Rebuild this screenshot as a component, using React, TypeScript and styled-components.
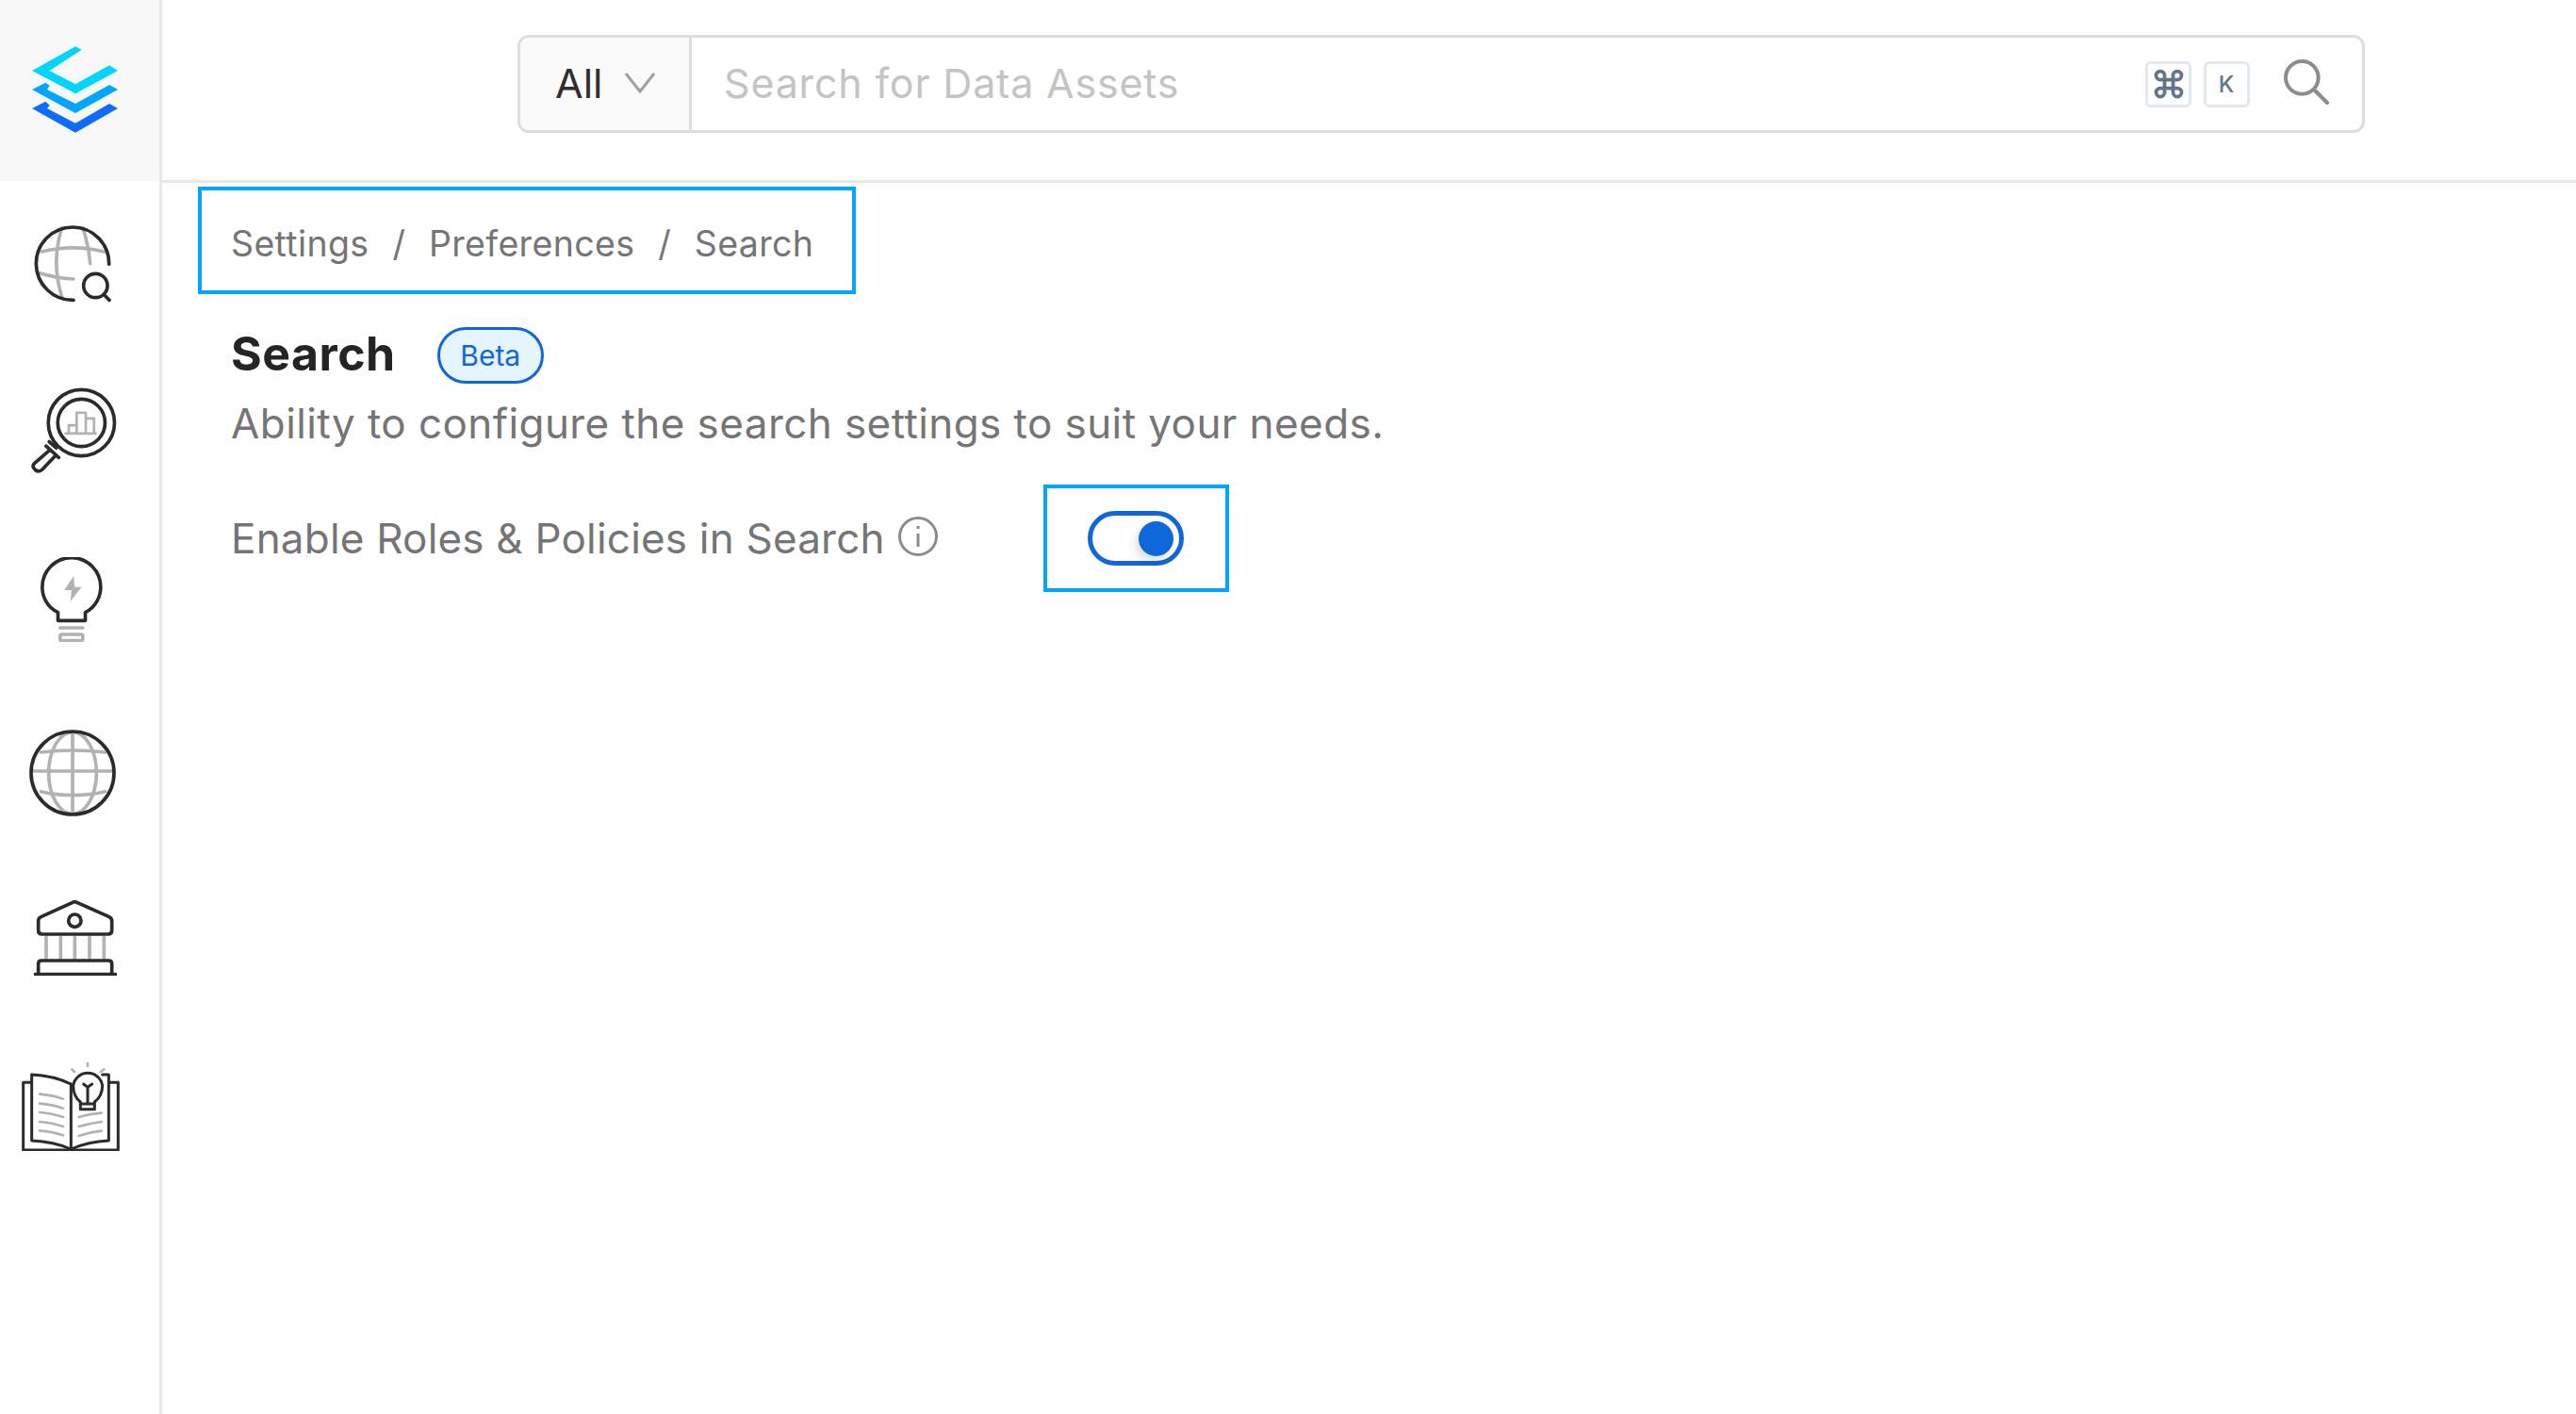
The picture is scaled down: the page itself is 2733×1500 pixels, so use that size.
import { Command } from "lucide-react";
import styled, { createGlobalStyle } from "styled-components";

const GlobalStyle = createGlobalStyle`
  html, body {
    margin: 0;
    height: 100%;
    background: #fff;
  }
  body {
    font-family: "Inter", "Open Sans", sans-serif;
  }
`;

const Page = styled.div`
  display: flex;
  width: 2733px;
  height: 1500px;
  overflow: hidden;
`;

const Sidebar = styled.aside`
  flex: 0 0 172px;
  box-sizing: border-box;
  border-right: 3px solid #e8e8e8;
`;

const LogoCell = styled.div`
  height: 192px;
  background: #f8f8f8;
  padding: 49px 0 0 34px;
  box-sizing: border-box;
`;

const Nav = styled.nav`
  display: flex;
  flex-direction: column;
  padding-top: 46px;
`;

const NavIcon = styled.svg<{ $left: number; $gap: number }>`
  display: block;
  margin-left: ${({ $left }) => $left}px;
  margin-top: ${({ $gap }) => $gap}px;
  fill: none;
  stroke-linecap: round;
  stroke-linejoin: round;
  .dark {
    stroke: #2b2b2b;
    stroke-width: 11;
  }
  .thin {
    stroke: #2b2b2b;
    stroke-width: 9;
  }
  .soft {
    stroke: #b2b2b2;
    stroke-width: 11;
  }
  .softthin {
    stroke: #b2b2b2;
    stroke-width: 8;
  }
`;

const Main = styled.main`
  flex: 1;
  min-width: 0;
`;

const Header = styled.header`
  height: 194px;
  box-sizing: border-box;
  border-bottom: 3px solid #e8e8e8;
  padding: 37px 0 0 377px;
`;

const SearchBar = styled.div`
  display: flex;
  width: 1960px;
  height: 104px;
  box-sizing: border-box;
  border: 3px solid #dedede;
  border-radius: 12px;
  overflow: hidden;
`;

const Scope = styled.div`
  flex: 0 0 182px;
  box-sizing: border-box;
  display: flex;
  align-items: center;
  padding: 0 0 2px 37px;
  background: #fafafa;
  border-right: 3px solid #dedede;
  color: #2f2f2f;
  font-size: 43px;
`;

const Chevron = styled.svg`
  margin-left: 23px;
  fill: none;
  stroke: #a0a0a0;
  stroke-width: 3;
`;

const Query = styled.div`
  flex: 1;
  display: flex;
  align-items: center;
  padding-left: 34px;
  color: #c4c4c4;
  font-size: 43px;
  letter-spacing: 0.8px;
`;

const Placeholder = styled.span`
  flex: 1;
  padding-bottom: 2px;
`;

const Shortcut = styled.kbd`
  flex: 0 0 49px;
  height: 49px;
  box-sizing: border-box;
  display: flex;
  align-items: center;
  justify-content: center;
  margin-left: 13px;
  border: 3px solid #e2e8f0;
  border-radius: 6px;
  color: #64748b;
  font-family: "Inter", sans-serif;
  font-size: 24px;
  font-weight: 500;
`;

const SearchIcon = styled.svg`
  margin: 0 35px 4px 36px;
  fill: none;
  stroke: #8c8c8c;
  stroke-width: 12;
  stroke-linecap: round;
`;

const Highlight = styled.div`
  box-sizing: border-box;
  border: 4px solid #00a6ff;
`;

const Crumbs = styled(Highlight)`
  display: flex;
  align-items: center;
  width: 698px;
  height: 114px;
  margin: 4px 0 0 38px;
  padding: 6px 0 0 31px;
  color: #757575;
  font-size: 37.5px;
`;

const Crumb = styled.span`
  letter-spacing: 0.35px;
`;

const Slash = styled.span`
  margin: 0 25px;
`;

const Content = styled.section`
  padding: 32px 0 0 73px;
`;

const TitleRow = styled.div`
  display: flex;
  align-items: center;
  height: 62px;
`;

const Title = styled.h1`
  margin: 0;
  color: #242424;
  font-size: 50px;
  font-weight: 700;
  letter-spacing: 0.5px;
`;

const Badge = styled.span`
  box-sizing: border-box;
  width: 113px;
  height: 60px;
  margin: 4px 0 0 44px;
  display: flex;
  align-items: center;
  justify-content: center;
  background: #e6f4ff;
  border: 3px solid #0f67d9;
  border-radius: 30px;
  color: #0f67d9;
  font-size: 30px;
`;

const Description = styled.p`
  margin: 10px 0 0;
  color: #757575;
  font-size: 44px;
  line-height: 66px;
  letter-spacing: 0.42px;
`;

const SettingRow = styled.div`
  display: flex;
  align-items: center;
  margin-top: 32px;
`;

const SettingLabel = styled.span`
  color: #757575;
  font-size: 44px;
  letter-spacing: 0.2px;
`;

const InfoIcon = styled.svg`
  margin: 0 0 4px 14px;
  fill: none;
  stroke: #8c8c8c;
`;

const ToggleBox = styled(Highlight)`
  display: flex;
  align-items: center;
  justify-content: center;
  width: 197px;
  height: 114px;
  margin-left: 112px;
`;

const Toggle = styled.div`
  box-sizing: border-box;
  width: 102px;
  height: 58px;
  display: flex;
  align-items: center;
  justify-content: flex-end;
  padding-right: 6px;
  border: 5px solid #0f67d9;
  border-radius: 29px;
  background: #fff;
`;

const Knob = styled.div`
  width: 37px;
  height: 37px;
  border-radius: 50%;
  background: #0f67d9;
  box-shadow: -3px 5px 10px rgba(0, 0, 0, 0.14);
`;

const Logo = () => (
  <svg width="91" height="92" viewBox="102 148 273 274">
    <polygon fill="#00d5ff" points="240,148 260,158 158,225 240,268 348,208 375,225 240,298 102,225" />
    <polygon fill="#00a6ff" points="102,285 145,263 158,272 150,285 240,330 348,270 375,285 240,360" />
    <polygon fill="#0f6bff" points="102,345 145,323 158,335 150,345 240,392 348,330 375,345 240,422" />
  </svg>
);

const GlobeSearch = () => (
  <NavIcon $left={36} $gap={0} width="82" height="83" viewBox="106 713 246 249">
    <path className="soft" d="M130 800 Q230 775 330 800" />
    <path className="soft" d="M125 868 Q180 885 232 887" />
    <path className="soft" d="M195 725 Q160 830 195 945" />
    <path className="soft" d="M262 725 Q280 780 285 838" />
    <path className="dark" d="M345 840 A116 116 0 1 0 232 954" />
    <circle className="dark" cx="302" cy="908" r="38" />
    <path className="dark" d="M330 938 L346 954" />
  </NavIcon>
);

const InsightSearch = () => (
  <NavIcon $left={33} $gap={90} width="92" height="91" viewBox="100 150 272 272">
    <path className="softthin" d="M208 296 H304 M218 296 V270 H243 V296 M243 270 V230 H272 V296 M272 248 H298 V296" />
    <circle className="dark" cx="258" cy="262" r="105" />
    <circle className="dark" cx="258" cy="262" r="75" />
    <path className="dark" d="M146 336 L186 372 M178 342 L156 322 M156 350 L108 392 Q100 402 112 412 Q124 420 134 410 L176 366" />
  </NavIcon>
);

const Bulb = () => (
  <NavIcon $left={43} $gap={89} width="67" height="90" viewBox="130 690 200 270">
    <path className="dark" d="M185 866 C150 850 135 815 135 785 A93 93 0 0 1 321 785 C321 815 305 850 272 866 V892 H185 Z" />
    <polygon fill="#b2b2b2" points="235,750 205,795 228,795 225,830 260,785 238,785" />
    <path className="soft" d="M192 915 H264" />
    <rect className="soft" x="192" y="936" width="72" height="20" rx="5" />
  </NavIcon>
);

const Globe = () => (
  <NavIcon $left={31} $gap={93} width="92" height="92" viewBox="93 338 276 276">
    <ellipse className="soft" cx="231" cy="476" rx="76" ry="130" />
    <path className="soft" d="M231 346 V606 M100 470 H362" />
    <path className="soft" d="M130 410 Q230 398 335 410 M130 535 Q230 558 335 535" />
    <circle className="dark" cx="231" cy="476" r="132" />
  </NavIcon>
);

const Bank = () => (
  <NavIcon $left={36} $gap={89} width="88" height="80" viewBox="108 -20 264 240">
    <path className="soft" d="M147 98 V164 M193 98 V164 M238 98 V164 M285 98 V164 M331 98 V164" />
    <path className="dark" d="M238 -16 L132 32 Q122 36 122 46 V76 Q122 88 134 88 H344 Q356 88 356 76 V46 Q356 36 346 32 Z" />
    <circle className="dark" cx="238" cy="45" r="20" />
    <path className="dark" d="M122 212 V182 Q122 172 132 172 H346 Q356 172 356 182 V212 M112 216 H368" />
  </NavIcon>
);

const Book = () => (
  <NavIcon $left={23} $gap={92} width="104" height="94" viewBox="68 496 312 282">
    <path className="softthin" d="M278 498 V508 M228 518 L236 526 M330 518 L320 526" />
    <path className="softthin" d="M125 597 Q165 600 200 612 M125 627 Q165 630 200 642 M125 655 Q165 658 200 670 M125 685 Q165 688 200 700 M125 713 Q165 716 200 728" />
    <path className="softthin" d="M250 670 Q285 660 322 657 M250 700 Q285 690 322 685 M250 730 Q285 718 322 714" />
    <path className="thin" d="M100 560 H73 V775 H375 V560 H348" />
    <path className="thin" d="M225 565 Q170 538 100 535 V745 Q170 748 225 772 Q280 748 345 745 V535 H325" />
    <path className="thin" d="M225 565 V772" />
    <path className="thin" fill="#fff" d="M255 622 C240 610 232 592 232 570 A47 47 0 0 1 325 570 C325 592 315 610 300 622 V645 H255 Z" />
    <path className="thin" d="M265 565 L278 575 L292 565 M278 575 V622 M258 628 H298" />
  </NavIcon>
);

export default function App() {
  return (
    <>
      <GlobalStyle />
      <Page>
        <Sidebar>
          <LogoCell>
            <Logo />
          </LogoCell>
          <Nav>
            <GlobeSearch />
            <InsightSearch />
            <Bulb />
            <Globe />
            <Bank />
            <Book />
          </Nav>
        </Sidebar>
        <Main>
          <Header>
            <SearchBar>
              <Scope>
                All
                <Chevron width="32" height="22" viewBox="0 0 32 22">
                  <path d="M1 1 L16 20 L31 1" />
                </Chevron>
              </Scope>
              <Query>
                <Placeholder>Search for Data Assets</Placeholder>
                <Shortcut>
                  <Command size={36} strokeWidth={2.5} />
                </Shortcut>
                <Shortcut>K</Shortcut>
                <SearchIcon width="48" height="48" viewBox="0 0 144 144">
                  <circle cx="58" cy="58" r="52" />
                  <path d="M96 96 L138 138" />
                </SearchIcon>
              </Query>
            </SearchBar>
          </Header>
          <Crumbs>
            <Crumb>Settings</Crumb>
            <Slash>/</Slash>
            <Crumb>Preferences</Crumb>
            <Slash>/</Slash>
            <Crumb>Search</Crumb>
          </Crumbs>
          <Content>
            <TitleRow>
              <Title>Search</Title>
              <Badge>Beta</Badge>
            </TitleRow>
            <Description>Ability to configure the search settings to suit your needs.</Description>
            <SettingRow>
              <SettingLabel>Enable Roles &amp; Policies in Search</SettingLabel>
              <InfoIcon width="42" height="42" viewBox="0 0 42 42">
                <circle cx="21" cy="21" r="19.5" strokeWidth="3" />
                <path d="M21 18 V32 M21 10 V13" strokeWidth="3" />
              </InfoIcon>
              <ToggleBox>
                <Toggle>
                  <Knob />
                </Toggle>
              </ToggleBox>
            </SettingRow>
          </Content>
        </Main>
      </Page>
    </>
  );
}
